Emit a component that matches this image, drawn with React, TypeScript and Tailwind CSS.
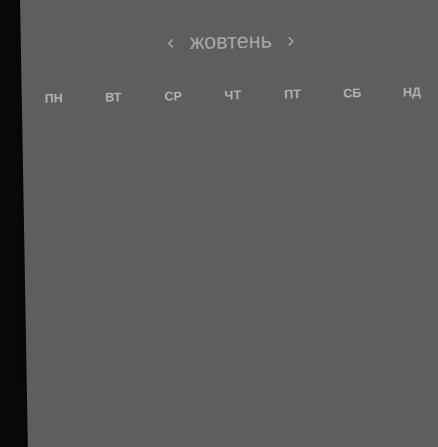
const days = ["пн", "вт", "ср", "чт", "пт", "сб", "нд"];

export default function App() {
  return (
    <div className="w-[438px] h-[447px] overflow-hidden bg-[#0a0a0a] pl-[24px] font-['Liberation_Sans',Arial,sans-serif]">
      <div className="w-[460px] h-[500px] -mt-[26px] rotate-[-1deg] bg-[#5e5e5e] shadow-[-4px_0_6px_rgba(0,0,0,0.35)] pt-[54px] pl-[2px]">
        {/* Month header */}
        <div className="w-[416px] flex items-center justify-center gap-[15px] text-[#a6a6a6]">
          <svg width="8" height="12" viewBox="0 0 8 12" className="mt-[1px]">
            <polyline points="6,2 2,6 6,10" fill="none" stroke="currentColor" strokeWidth="1.5" />
          </svg>
          <span className="text-[21.5px] leading-[26px]">жовтень</span>
          <svg width="8" height="12" viewBox="0 0 8 12" className="mt-[1px]">
            <polyline points="2,2 6,6 2,10" fill="none" stroke="currentColor" strokeWidth="1.5" />
          </svg>
        </div>

        {/* Weekdays */}
        <div className="w-[418px] grid grid-cols-7 mt-[34px]">
          {days.map((d) => (
            <div key={d} className="text-center uppercase font-bold text-[12.5px] leading-[14px] text-[#b0b0b0]">
              {d}
            </div>
          ))}
        </div>
      </div>
    </div>
  );
}
